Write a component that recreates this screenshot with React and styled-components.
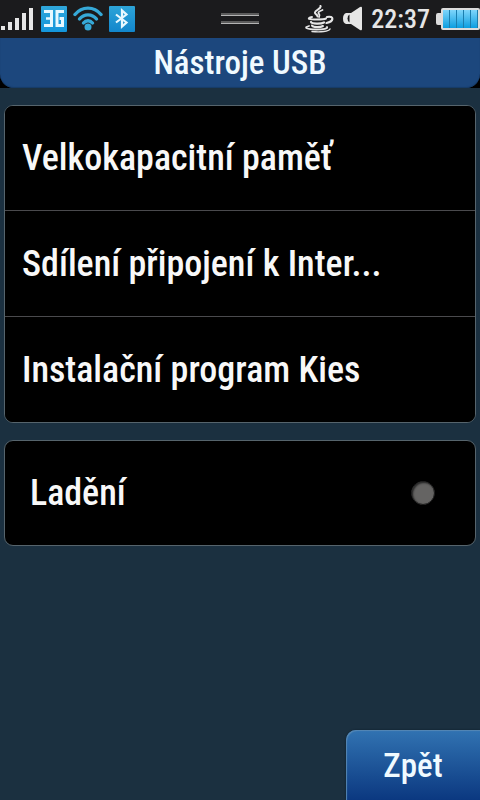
import { useState } from "react";
import styled, { createGlobalStyle } from "styled-components";

const GlobalStyle = createGlobalStyle`
  * {
    box-sizing: border-box;
  }
  body {
    margin: 0;
    background-color: #1b3040;
    color: #f8f8f8;
    font-family: "Roboto Condensed", Roboto, "Noto Sans", sans-serif;
  }
  button {
    border: 0;
    color: inherit;
    font-family: inherit;
    cursor: pointer;
  }
`;

const Screen = styled.div`
  min-height: 100vh;
  display: flex;
  flex-direction: column;
`;

const StatusBar = styled.div`
  height: 38px;
  display: grid;
  grid-template-columns: 1fr auto 1fr;
  align-items: center;
  background-color: #1b1b1d;
  svg {
    display: block;
    flex-shrink: 0;
  }
`;

const StatusGroup = styled.div`
  display: flex;
  align-items: center;
  justify-content: ${(props) => (props.$end ? "flex-end" : "flex-start")};
  gap: 6px;
`;

const Clock = styled.time`
  font-size: 26px;
  font-weight: 500;
  line-height: 38px;
  color: #e6e6e6;
`;

const TitleBar = styled.header`
  background-color: #000;
`;

const Title = styled.h1`
  margin: 0;
  height: 50px;
  border-radius: 0 0 14px 14px;
  background-color: #1c477d;
  box-shadow: inset 0 -1px 1px #173b66;
  color: #f0faff;
  font-size: 33px;
  font-weight: 500;
  line-height: 50px;
  text-align: center;
`;

const Content = styled.main`
  display: flex;
  flex-direction: column;
  gap: 17px;
  padding: 17px 4px;
`;

const Card = styled.section`
  overflow: hidden;
  border: 1px solid #56646c;
  border-radius: 9px;
  background-color: #000;
`;

const MenuItem = styled.button`
  display: block;
  width: 100%;
  height: 104px;
  padding: 0 17px;
  background-color: #000;
  font-size: 36px;
  font-weight: 500;
  text-align: left;
  white-space: nowrap;
  & + & {
    height: 106px;
    border-top: 1px solid #4a4a4d;
  }
`;

const ToggleRow = styled.label`
  height: 104px;
  display: flex;
  align-items: center;
  justify-content: space-between;
  padding: 0 40px 0 25px;
  font-size: 36px;
  font-weight: 500;
  cursor: pointer;
`;

const Toggle = styled.input`
  appearance: none;
  width: 24px;
  height: 24px;
  margin: 0;
  border: 1px solid #1c1c1c;
  border-radius: 50%;
  background-color: #656463;
  box-shadow: inset 1px 1px 2px #222;
  cursor: pointer;
  &:checked {
    background-color: #3fb4ea;
  }
`;

const Footer = styled.footer`
  display: flex;
  justify-content: flex-end;
  margin-top: auto;
`;

const BackButton = styled.button`
  width: 134px;
  height: 70px;
  border-radius: 10px 0 0 0;
  background: linear-gradient(#3173b2, #0b3880);
  box-shadow: inset 1px 1px 1px #5688b5, 0 0 2px #0c1c28;
  color: #f0faff;
  font-size: 33px;
  font-weight: 500;
`;

function SignalIcon() {
  return (
    <svg width="35" height="26" viewBox="0 0 35 26" fill="#e6e6e6">
      <rect x="1" y="20" width="4" height="4" />
      <rect x="8" y="16" width="4" height="8" />
      <rect x="15" y="12" width="4" height="12" />
      <rect x="22" y="7" width="4" height="17" />
      <rect x="29" y="2" width="4" height="22" />
    </svg>
  );
}

function NetworkIcon() {
  return (
    <svg width="26" height="26" viewBox="0 0 26 26">
      <defs>
        <linearGradient id="network" x1="0" y1="0" x2="0" y2="1">
          <stop offset="0" stopColor="#2fa6da" />
          <stop offset="1" stopColor="#1496dc" />
        </linearGradient>
      </defs>
      <rect width="26" height="26" rx="1" fill="url(#network)" />
      <g fill="none" stroke="#e8f8ff">
        <path d="M3 5.500H12" strokeWidth="3" />
        <path d="M3 19.500H12" strokeWidth="3" />
        <path d="M5 12.500H12" strokeWidth="2.500" />
        <path d="M10.500 5V20" strokeWidth="3" />
        <path d="M23 5.500H16V19.500H21.500V12.500H18.500" strokeWidth="3" />
      </g>
    </svg>
  );
}

function WifiIcon() {
  return (
    <svg width="30" height="26" viewBox="0 0 30 26">
      <g fill="none" stroke="#36a9d8" strokeWidth="3.400" strokeLinecap="round">
        <path d="M2 8.500C9 0 21 0 28 8.500" />
        <path d="M6.500 13C11 7.500 19 7.500 23.500 13" />
        <path d="M10.500 17C13 14 17 14 19.500 17" />
      </g>
      <circle cx="15" cy="21" r="3.500" fill="#36a9d8" />
    </svg>
  );
}

function BluetoothIcon() {
  return (
    <svg width="26" height="26" viewBox="0 0 26 26">
      <defs>
        <linearGradient id="bluetooth" x1="0" y1="0" x2="0" y2="1">
          <stop offset="0" stopColor="#2da4d8" />
          <stop offset="1" stopColor="#1286cc" />
        </linearGradient>
      </defs>
      <rect width="26" height="26" rx="1" fill="url(#bluetooth)" />
      <path
        d="M7 8.500L17.500 16.500L13 20.500V4.500L17.500 8.500L7 16.500"
        fill="none"
        stroke="#e8f8ff"
        strokeWidth="2.200"
      />
    </svg>
  );
}

function HandleIcon() {
  return (
    <svg width="38" height="12" viewBox="0 0 38 12">
      <path d="M0 1H38M0 9H38" stroke="#5c5c5c" strokeWidth="2" />
      <path d="M0 2.500H38M0 10.500H38" stroke="#b4b4b4" />
    </svg>
  );
}

function JavaIcon() {
  return (
    <svg
      width="32"
      height="28"
      viewBox="0 0 32 28"
      fill="none"
      stroke="#e6e6e6"
      strokeLinecap="round"
    >
      <path d="M15.500 1C17 4 9 5 10 8C10.500 9.500 12.500 9.500 12.500 11.500" strokeWidth="2" />
      <path d="M17.500 5C13.500 6.500 12.500 7.500 14 9C15 10 14.500 11 14 12" strokeWidth="1.800" />
      <path d="M7 12C1 13.500 4 14.500 12 14.500C17 14.500 20 14 21 13.500" strokeWidth="2" />
      <path d="M22 12C29.500 10.500 29 16.500 21.500 18" strokeWidth="2.200" />
      <path d="M6 17C7 19 16 19 19 17.500" strokeWidth="2.200" />
      <path d="M7 20.500C8 22.500 15 22.500 18 21" strokeWidth="2" />
      <path d="M4 21C-2 22.500 2 24.500 11 24.500C19 24.500 23 23.500 22 22" strokeWidth="1.800" />
      <path d="M7 26.500C15 27.500 24 26.500 25 24" strokeWidth="1.400" />
    </svg>
  );
}

function SpeakerIcon() {
  return (
    <svg width="22" height="26" viewBox="0 0 22 26">
      <path
        d="M3 7H8L17 1Q19 0 19 2V23Q19 25 17 24L8 18H3Q0 17 0 12.500Q0 8 3 7Z"
        fill="#e6e6e6"
      />
      <path d="M6.500 8.500V16.500Q4.500 15.500 4.500 12.500Q4.500 9.500 6.500 8.500Z" fill="#1b1b1d" />
    </svg>
  );
}

function BatteryIcon() {
  return (
    <svg width="44" height="22" viewBox="0 0 44 22">
      <defs>
        <linearGradient id="charge" x1="0" y1="0" x2="0" y2="1">
          <stop offset="0" stopColor="#7fd6fb" />
          <stop offset="1" stopColor="#0b9ee0" />
        </linearGradient>
      </defs>
      <path
        d="M5 2Q5 0 7 0H42Q44 0 44 2V20Q44 22 42 22H7Q5 22 5 20V17H2Q0 17 0 15V7Q0 5 2 5H5Z"
        fill="#dcdcdc"
      />
      <rect x="7" y="2" width="35" height="18" fill="#1b7eae" />
      {[7, 14, 21, 28, 35].map((x) => (
        <rect key={x} x={x} y="2" width="6" height="18" fill="url(#charge)" />
      ))}
    </svg>
  );
}

const MENU_ITEMS = [
  "Velkokapacitní paměť",
  "Sdílení připojení k Inter...",
  "Instalační program Kies",
];

function App() {
  const [debugging, setDebugging] = useState(false);
  return (
    <Screen>
      <GlobalStyle />
      <StatusBar>
        <StatusGroup>
          <SignalIcon />
          <NetworkIcon />
          <WifiIcon />
          <BluetoothIcon />
        </StatusGroup>
        <HandleIcon />
        <StatusGroup $end>
          <JavaIcon />
          <SpeakerIcon />
          <Clock>22:37</Clock>
          <BatteryIcon />
        </StatusGroup>
      </StatusBar>
      <TitleBar>
        <Title>Nástroje USB</Title>
      </TitleBar>
      <Content>
        <Card>
          {MENU_ITEMS.map((item) => (
            <MenuItem key={item} type="button">
              {item}
            </MenuItem>
          ))}
        </Card>
        <Card>
          <ToggleRow>
            Ladění
            <Toggle
              type="checkbox"
              checked={debugging}
              onChange={() => setDebugging(!debugging)}
            />
          </ToggleRow>
        </Card>
      </Content>
      <Footer>
        <BackButton type="button">Zpět</BackButton>
      </Footer>
    </Screen>
  );
}

export default App;
